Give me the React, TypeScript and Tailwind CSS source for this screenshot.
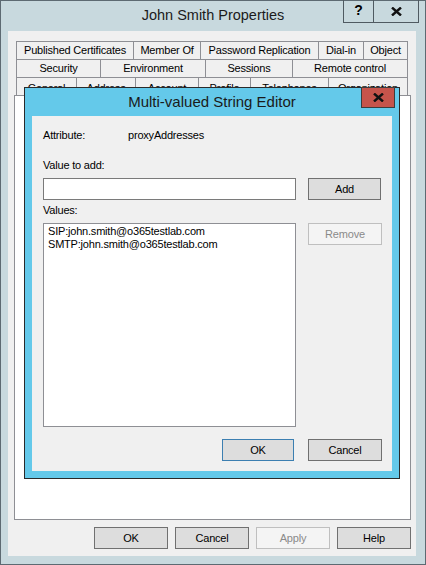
const tabRows = [
  [
    ["Published Certificates", 118],
    ["Member Of", 67],
    ["Password Replication", 118],
    ["Dial-in", 45],
    ["Object", 44],
  ],
  [
    ["Security", 85],
    ["Environment", 105],
    ["Sessions", 87],
    ["Remote control", 115],
  ],
  [
    ["General", 61],
    ["Address", 59],
    ["Account", 63],
    ["Profile", 52],
    ["Telephones", 78],
    ["Organization", 79],
  ],
] as const

export default function App() {
  return (
    <div className="relative w-[426px] h-[565px] bg-[#c8d9de] border border-[#5d6a72] flex flex-col font-['Liberation_Sans',Arial,sans-serif] text-[11px] tracking-[-0.2px] text-black">
      <TitleBar />

      <div className="ml-[7px] mr-[9px] mb-[8px] flex-1 bg-[#f0f0f0] flex flex-col pt-[10px]">
        <Tabs />
        <div className="ml-[6px] w-[397px] h-[425px] bg-white border border-[#8e8f94]"></div>

        <div className="flex justify-end gap-[7px] pr-[5px] mt-[7px]">
          <Button label="OK" w="w-[74px]" />
          <Button label="Cancel" w="w-[74px]" />
          <Button label="Apply" w="w-[74px]" disabled />
          <Button label="Help" w="w-[74px]" />
        </div>
      </div>

      <StringEditor />
    </div>
  )
}

function TitleBar() {
  return (
    <div className="h-[30px] grid grid-cols-[1fr_auto_1fr] items-start">
      <div></div>
      <div className="h-[30px] flex items-center text-[14.5px] tracking-normal text-[#1b1b1b]">
        John Smith Properties
      </div>
      <div className="flex justify-end mr-[6px] -mt-[1px]">
        <div className="w-[30px] h-[23px] border-l border-b border-[#4f5a61] flex items-center justify-center font-bold text-[14px] leading-none pb-[2px]">
          ?
        </div>
        <div className="w-[46px] h-[23px] border-l border-b border-r border-[#4f5a61] flex items-center justify-center">
          <svg width="11" height="9" viewBox="0 0 11 9">
            <path d="M1 0.5 L10 8.5 M10 0.5 L1 8.5" stroke="#111" strokeWidth="2.4" />
          </svg>
        </div>
      </div>
    </div>
  )
}

function Tabs() {
  return (
    <div className="ml-[8px] w-[392px] flex flex-col">
      {tabRows.map((row, i) => (
        <div key={i} className="flex h-[18px] border-t border-[#8e8f94]">
          {row.map(([name, w], j) => (
            <div
              key={name}
              style={{ width: w }}
              className={`h-full border-r border-[#8e8f94] ${j === 0 ? "border-l" : ""} ${i === 2 ? "pt-[3px]" : ""} flex items-center justify-center leading-none bg-[#f0f0f0]`}
            >
              {name}
            </div>
          ))}
        </div>
      ))}
    </div>
  )
}

function Button({ label, w, disabled, primary }: { label: string; w: string; disabled?: boolean; primary?: boolean }) {
  const tone = disabled
    ? "bg-[#f4f4f4] border-[#bfbfbf] text-[#8a8a8a]"
    : primary
    ? "bg-[#dddddd] border-[#3c7fb1]"
    : "bg-[#dddddd] border-[#707070]"
  return (
    <div className={`${w} h-[22px] border ${tone} flex items-center justify-center leading-none`}>
      {label}
    </div>
  )
}

function StringEditor() {
  return (
    <div className="absolute left-[23px] top-[86px] w-[376px] h-[392px] border border-[#2a2a2a] bg-[#64c9ea] flex flex-col">
      <div className="h-[28px] relative flex items-center justify-center text-[15px] tracking-normal text-[#1a1a1a]">
        Multi-valued String Editor
        <div className="absolute right-[4px] -top-[1px] w-[34px] h-[21px] bg-[#c6544b] border border-[#3d3d3d] flex items-center justify-center">
          <svg width="11" height="9" viewBox="0 0 11 9">
            <path d="M1 0.5 L10 8.5 M10 0.5 L1 8.5" stroke="#111" strokeWidth="2.4" />
          </svg>
        </div>
      </div>

      <div className="mx-[7px] h-[355px] bg-[#f0f0f0] flex flex-col pl-[11px] leading-[15px]">
        <div className="mt-[12px] flex">
          <span className="w-[85px]">Attribute:</span>
          <span>proxyAddresses</span>
        </div>

        <div className="mt-[15px]">Value to add:</div>
        <div className="mt-[5px] flex items-start">
          <div className="w-[253px] h-[22px] bg-white border border-[#7a7a7a]"></div>
          <div className="ml-[12px]">
            <Button label="Add" w="w-[73px]" />
          </div>
        </div>

        <div className="mt-[3px]">Values:</div>
        <div className="mt-[5px] flex items-start">
          <div className="w-[253px] h-[204px] bg-white border border-[#8e8f94] pl-[4px] pt-[1px] leading-[13px]">
            <div>SIP:john.smith@o365testlab.com</div>
            <div>SMTP:john.smith@o365testlab.com</div>
          </div>
          <div className="ml-[12px]">
            <Button label="Remove" w="w-[74px]" disabled />
          </div>
        </div>

        <div className="mt-[12px] flex justify-end gap-[14px] pr-[10px]">
          <Button label="OK" w="w-[72px]" primary />
          <Button label="Cancel" w="w-[74px]" />
        </div>
      </div>
    </div>
  )
}
